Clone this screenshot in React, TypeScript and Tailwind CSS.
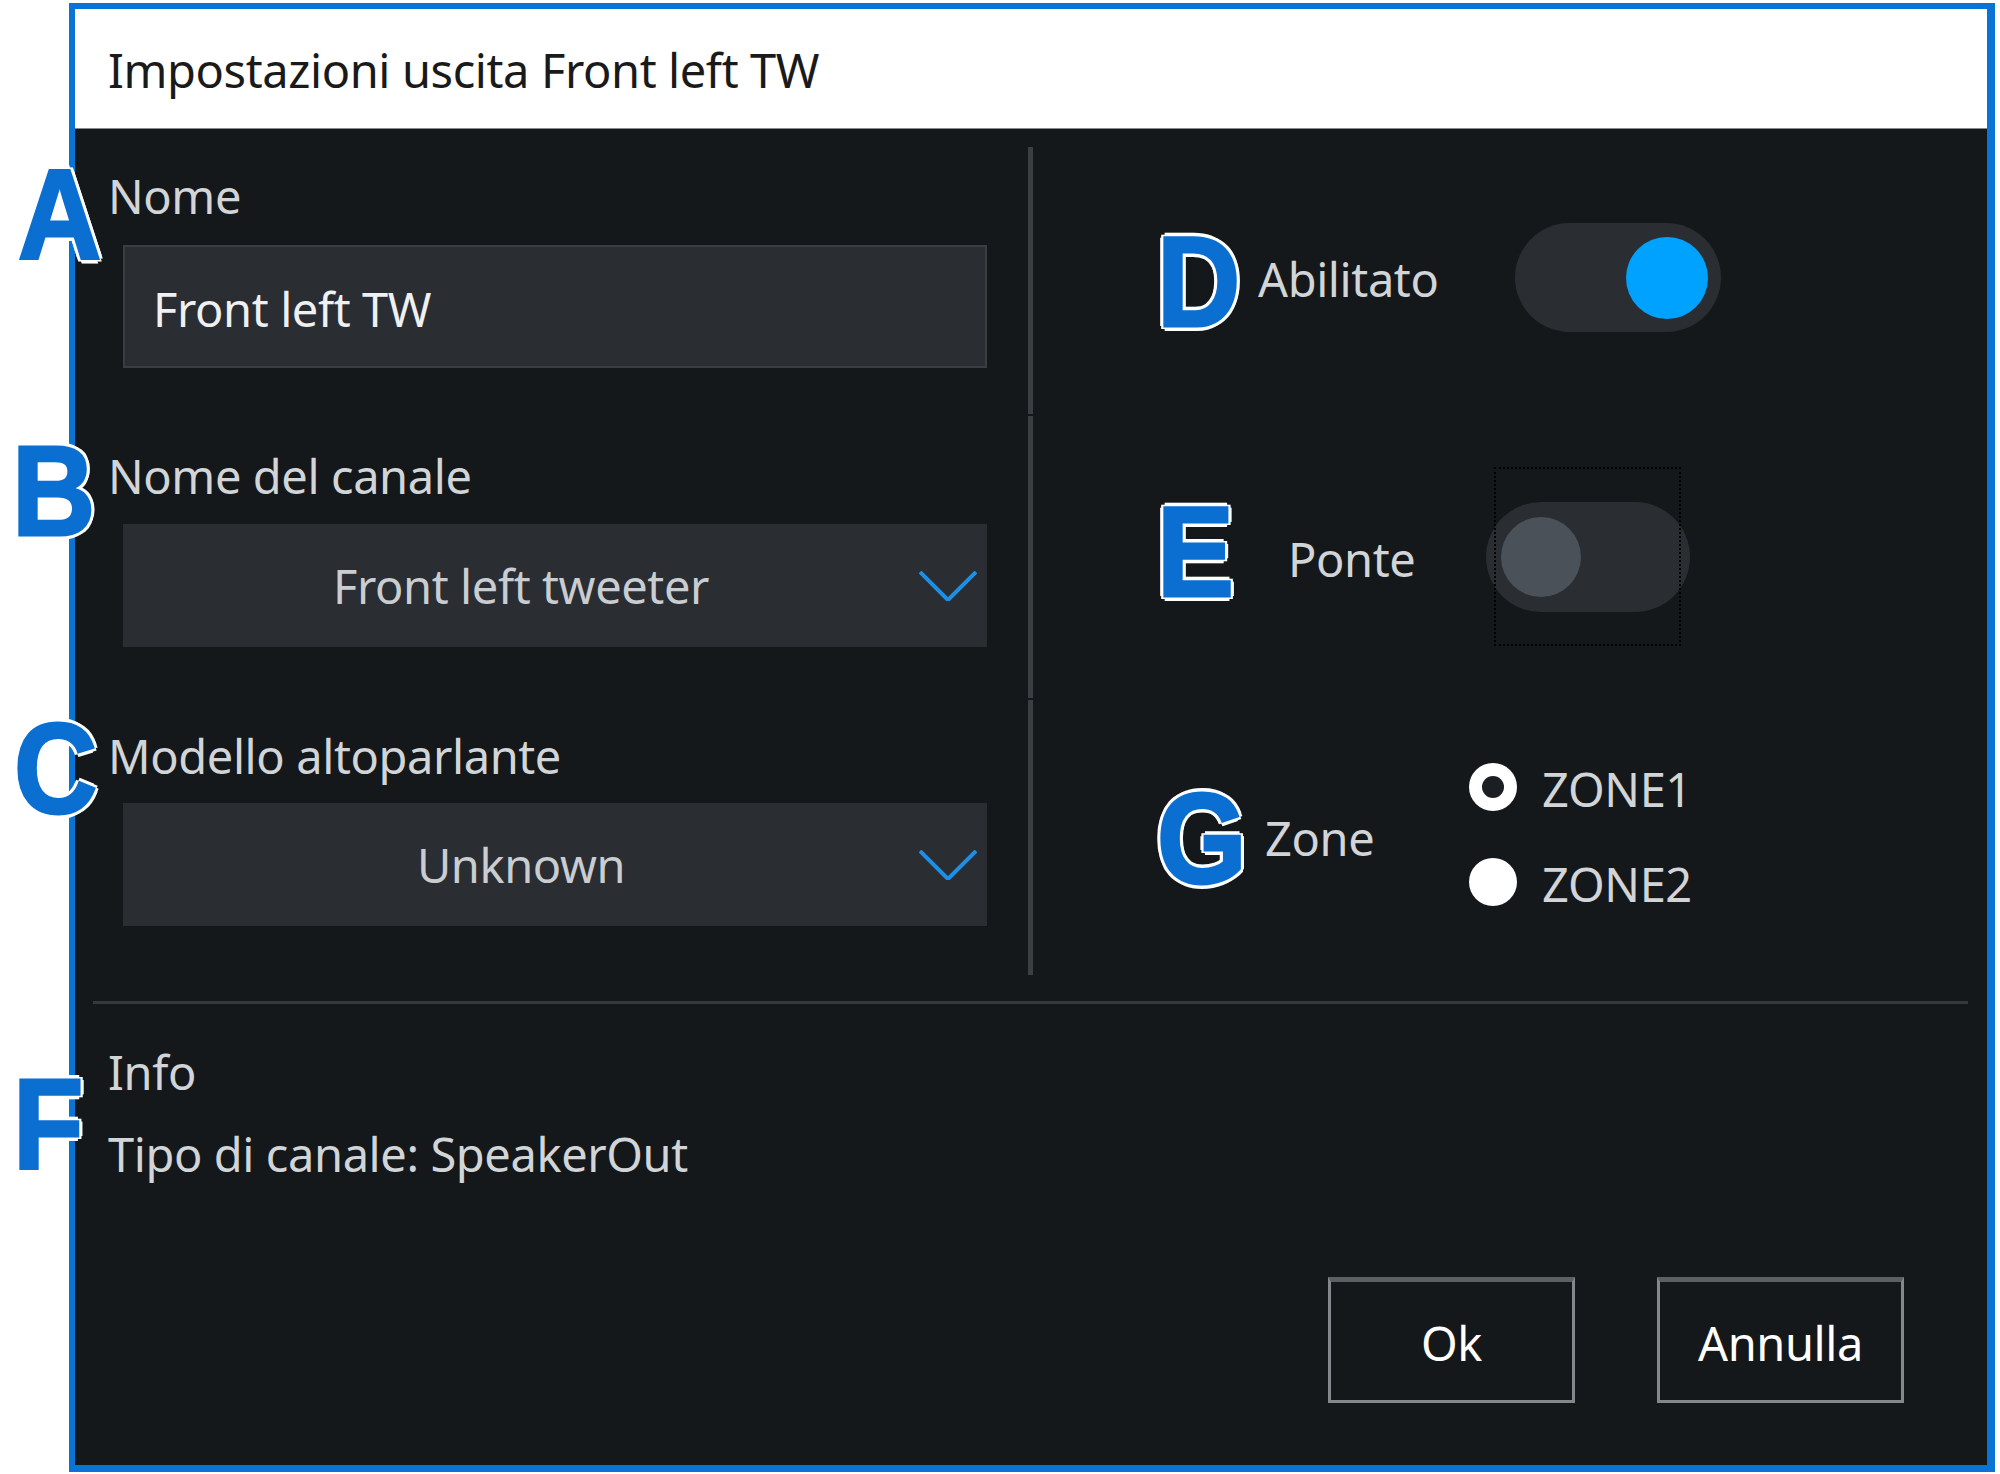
import React from "react";

function Letter({ ch, className }: { ch: string; className: string }) {
  return (
    <div
      className={
        "absolute font-['Liberation_Sans',sans-serif] font-bold text-[128px] leading-none text-[#0b6fd1] origin-left scale-x-[0.9] [-webkit-text-stroke:3px_#0b6fd1] [text-shadow:5px_0_0_#fff,-5px_0_0_#fff,0_5px_0_#fff,0_-5px_0_#fff,4px_3px_0_#fff,-4px_-3px_0_#fff,4px_-3px_0_#fff,-4px_3px_0_#fff] " +
        className
      }
    >
      {ch}
    </div>
  );
}

function Chevron() {
  return (
    <svg width="58" height="30" viewBox="0 0 58 30" className="shrink-0 mr-[10px]">
      <polyline points="1,1 29,29 57,1" fill="none" stroke="#1e8fe6" strokeWidth="4" />
    </svg>
  );
}

function Dropdown({ value }: { value: string }) {
  return (
    <div className="ml-[15px] w-[864px] h-[123px] bg-[#2a2d31] flex items-center">
      <div className="flex-1 text-center text-[47px] leading-[60px] text-[#c9cdd1]">{value}</div>
      <Chevron />
    </div>
  );
}

export default function App() {
  return (
    <div className="relative w-[2000px] h-[1474px] bg-white font-['Noto_Sans',sans-serif] tracking-[-0.4px] overflow-hidden">
      <div className="ml-[69px] mt-[3px] w-[1926px] h-[1469px] border-l-[6px] border-t-[6px] border-r-[8px] border-b-[7px] border-[#0a74d4] flex flex-col">
        {/* title bar */}
        <div className="h-[120px] shrink-0 bg-white border-b border-[#8a8a8a] pl-[33px] pt-[31px]">
          <div className="text-[47px] leading-[60px] text-[#1a1a1a]">Impostazioni uscita Front left TW</div>
        </div>
        {/* body */}
        <div className="flex-1 bg-[#15181b] flex flex-col">
          <div className="flex h-[846px] shrink-0 pt-[18px]">
            {/* left column */}
            <div className="w-[953px] shrink-0 pl-[33px] flex flex-col">
              <div className="mt-[19px] text-[47px] leading-[60px] text-[#d2d5d8]">Nome</div>
              <div className="mt-[19px] ml-[15px] w-[864px] h-[123px] bg-[#2a2d31] border-2 border-[#3a3e42] flex items-center pl-[28px] pt-[5px]">
                <span className="text-[47px] leading-[60px] text-[#eef0f2]">Front left TW</span>
              </div>
              <div className="mt-[78px] text-[47px] leading-[60px] text-[#d2d5d8]">Nome del canale</div>
              <div className="mt-[18px]">
                <Dropdown value="Front left tweeter" />
              </div>
              <div className="mt-[79px] text-[47px] leading-[60px] text-[#d2d5d8]">Modello altoparlante</div>
              <div className="mt-[17px]">
                <Dropdown value="Unknown" />
              </div>
            </div>
            {/* vertical divider */}
            <div className="w-[5px] shrink-0 flex flex-col gap-[2px]">
              <div className="h-[267px] bg-[#3b3f44]" />
              <div className="h-[282px] bg-[#3b3f44]" />
              <div className="h-[275px] bg-[#3b3f44]" />
            </div>
            {/* right column */}
            <div className="flex-1 flex flex-col">
              <div className="mt-[76px] pl-[225px] flex items-center">
                <div className="w-[257px] text-[47px] leading-[60px] text-[#d2d5d8] pt-[3px]">Abilitato</div>
                <div className="w-[206px] h-[109px] rounded-full bg-[#2a2d31] flex items-center justify-end pr-[13px]">
                  <div className="w-[82px] h-[82px] rounded-full bg-[#00a2ff]" />
                </div>
              </div>
              <div className="mt-[170px] pl-[255px] flex items-center">
                <div className="w-[198px] text-[47px] leading-[60px] text-[#d2d5d8] pt-[3px]">Ponte</div>
                <div className="w-[204px] h-[110px] rounded-full bg-[#2a2d31] flex items-center pl-[15px]">
                  <div className="w-[80px] h-[80px] rounded-full bg-[#4b5159]" />
                </div>
              </div>
              <div className="mt-[145px] pl-[232px] flex items-center">
                <div className="w-[204px] text-[47px] leading-[60px] text-[#d2d5d8] pt-[6px]">Zone</div>
                <div className="flex flex-col gap-[35px]">
                  <div className="h-[60px] flex items-center gap-[25px]">
                    <div className="w-[48px] h-[48px] rounded-full bg-white flex items-center justify-center">
                      <div className="w-[22px] h-[22px] rounded-full bg-[#1b1e22]" />
                    </div>
                    <span className="text-[47px] leading-[60px] text-[#d2d5d8] pt-[3px]">ZONE1</span>
                  </div>
                  <div className="h-[60px] flex items-center gap-[25px]">
                    <div className="w-[48px] h-[48px] rounded-full bg-white" />
                    <span className="text-[47px] leading-[60px] text-[#d2d5d8] pt-[3px]">ZONE2</span>
                  </div>
                </div>
              </div>
            </div>
          </div>
          {/* horizontal divider */}
          <div className="mt-[26px] ml-[18px] mr-[19px] h-[3px] bg-[#35393d]" />
          {/* info */}
          <div className="pl-[33px] flex flex-col">
            <div className="mt-[38px] text-[47px] leading-[60px] text-[#d2d5d8]">Info</div>
            <div className="mt-[22px] text-[47px] leading-[60px] text-[#d2d5d8]">Tipo di canale: SpeakerOut</div>
          </div>
          {/* buttons */}
          <div className="mt-auto flex justify-end gap-[82px] pr-[83px] pb-[62px]">
            <div className="w-[247px] h-[126px] border-[3px] border-[#84878b] border-t-[5px] border-t-[#5c6065] flex items-center justify-center pt-[4px] text-[47px] leading-[60px] text-white">
              Ok
            </div>
            <div className="w-[247px] h-[126px] border-[3px] border-[#84878b] border-t-[5px] border-t-[#5c6065] flex items-center justify-center pt-[4px] text-[47px] leading-[60px] text-white">
              Annulla
            </div>
          </div>
        </div>
      </div>

      {/* focus rectangle around Ponte toggle */}
      <div className="absolute left-[1494px] top-[467px] w-[187px] h-[179px] border-2 border-dotted border-black" />

      {/* annotation letters */}
      <Letter ch="A" className="left-[18px] top-[151px]" />
      <Letter ch="B" className="left-[12px] top-[427px]" />
      <Letter ch="C" className="left-[14px] top-[705px]" />
      <Letter ch="D" className="left-[1157px] top-[218px]" />
      <Letter ch="E" className="left-[1157px] top-[488px]" />
      <Letter ch="F" className="left-[13px] top-[1060px]" />
      <Letter ch="G" className="left-[1157px] top-[775px]" />
    </div>
  );
}
